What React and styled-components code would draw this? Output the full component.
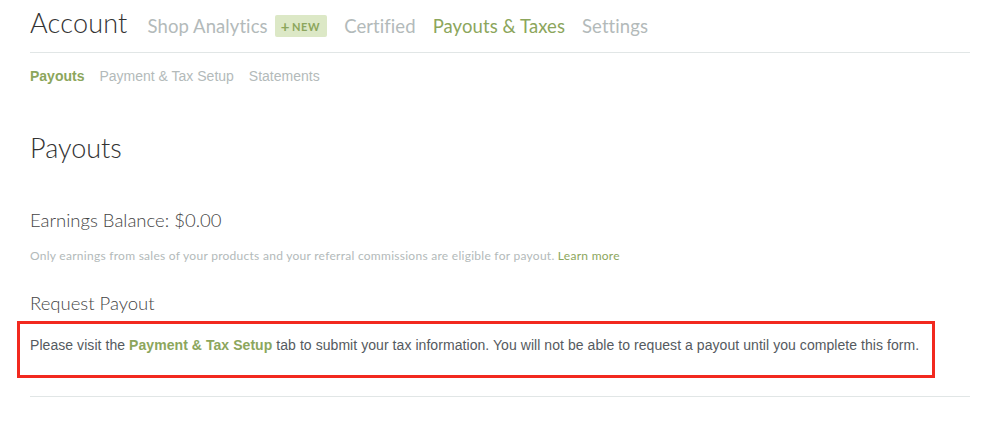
import styled, { createGlobalStyle } from 'styled-components'

const GlobalStyle = createGlobalStyle`
  html, body {
    margin: 0;
    padding: 0;
    background: #fff;
  }
  body {
    font-family: Lato, "Open Sans", sans-serif;
    color: #333;
  }
`

const green = '#8ca65c'
const gray = '#b3baba'

const tabs = [
  { label: 'Shop Analytics', badge: true },
  { label: 'Certified' },
  { label: 'Payouts & Taxes', active: true },
  { label: 'Settings' },
]

const subTabs = [
  { label: 'Payouts', active: true },
  { label: 'Payment & Tax Setup' },
  { label: 'Statements' },
]

function App() {
  return (
    <>
      <GlobalStyle />
      <Page>
        <Header>
          <Title>Account</Title>
          <Nav>
            {tabs.map((t) => (
              <NavItem key={t.label} $active={t.active}>
                {t.label}
                {t.badge && (
                  <Badge>
                    <Plus>+</Plus>NEW
                  </Badge>
                )}
              </NavItem>
            ))}
          </Nav>
        </Header>
        <SubNav>
          {subTabs.map((t) => (
            <SubItem key={t.label} $active={t.active}>{t.label}</SubItem>
          ))}
        </SubNav>

        <Heading>Payouts</Heading>

        <Balance>Earnings Balance: $0.00</Balance>
        <Note>
          Only earnings from sales of your products and your referral commissions are eligible for payout.{' '}
          <NoteLink href="#">Learn more</NoteLink>
        </Note>

        <SectionTitle>Request Payout</SectionTitle>
        <Alert>
          Please visit the <AlertLink href="#">Payment &amp; Tax Setup</AlertLink> tab to submit your tax
          information. You will not be able to request a payout until you complete this form.
        </Alert>
        <Rule />
      </Page>
    </>
  )
}

const Page = styled.div`
  width: 940px;
  padding: 0 0 0 30px;
`

const Header = styled.div`
  display: flex;
  align-items: baseline;
  height: 53px;
  border-bottom: 1px solid #e1e6e6;
  box-sizing: border-box;
  padding-top: 6px;
`

const Title = styled.h1`
  margin: 0 20px 0 0;
  font-size: 27px;
  font-weight: 300;
  color: #333;
  letter-spacing: 0.2px;
`

const Nav = styled.div`
  display: flex;
  align-items: baseline;
  gap: 17px;
`

const NavItem = styled.span`
  display: flex;
  align-items: center;
  gap: 7px;
  font-size: 18.5px;
  font-weight: 400;
  letter-spacing: 0.08px;
  color: ${(p) => (p.$active ? green : gray)};
`

const Badge = styled.span`
  display: inline-flex;
  align-items: center;
  height: 22px;
  background: #dce8c6;
  color: ${green};
  font-size: 11px;
  font-weight: 700;
  letter-spacing: 0.6px;
  padding: 0 7px 0 6px;
  border-radius: 2px;
`

const Plus = styled.span`
  font-size: 15px;
  font-weight: 700;
  margin-right: 2px;
  line-height: 1;
`

const SubNav = styled.div`
  display: flex;
  gap: 15px;
  padding-top: 15px;
  font-family: "Liberation Sans", Arial, sans-serif;
`

const SubItem = styled.span`
  font-size: 14px;
  font-weight: ${(p) => (p.$active ? 700 : 400)};
  color: ${(p) => (p.$active ? green : gray)};
`

const Heading = styled.h2`
  margin: 48px 0 0;
  font-size: 27px;
  font-weight: 300;
  color: #333;
  line-height: 32px;
`

const Balance = styled.div`
  margin-top: 44px;
  font-size: 18.5px;
  font-weight: 300;
  color: #444;
  line-height: 24px;
`

const Note = styled.p`
  margin: 16px 0 0;
  font-size: 12px;
  letter-spacing: 0.27px;
  color: ${gray};
  line-height: 16px;
`

const NoteLink = styled.a`
  color: ${green};
  text-decoration: none;
`

const SectionTitle = styled.div`
  margin-top: 28px;
  font-size: 18.5px;
  font-weight: 300;
  color: #444;
  line-height: 22px;
`

const Alert = styled.div`
  margin: 7px 0 0 -13px;
  width: 918px;
  box-sizing: border-box;
  border: 3px solid #f2291f;
  padding: 13px 2px 21px 10px;
  font-family: "Liberation Sans", Arial, sans-serif;
  font-size: 14px;
  letter-spacing: 0.06px;
  line-height: 17px;
  white-space: nowrap;
  color: #555a60;
`

const AlertLink = styled.a`
  color: ${green};
  font-weight: 700;
  text-decoration: none;
`

const Rule = styled.div`
  margin-top: 18px;
  border-top: 1px solid #e1e6e6;
`

export default App
